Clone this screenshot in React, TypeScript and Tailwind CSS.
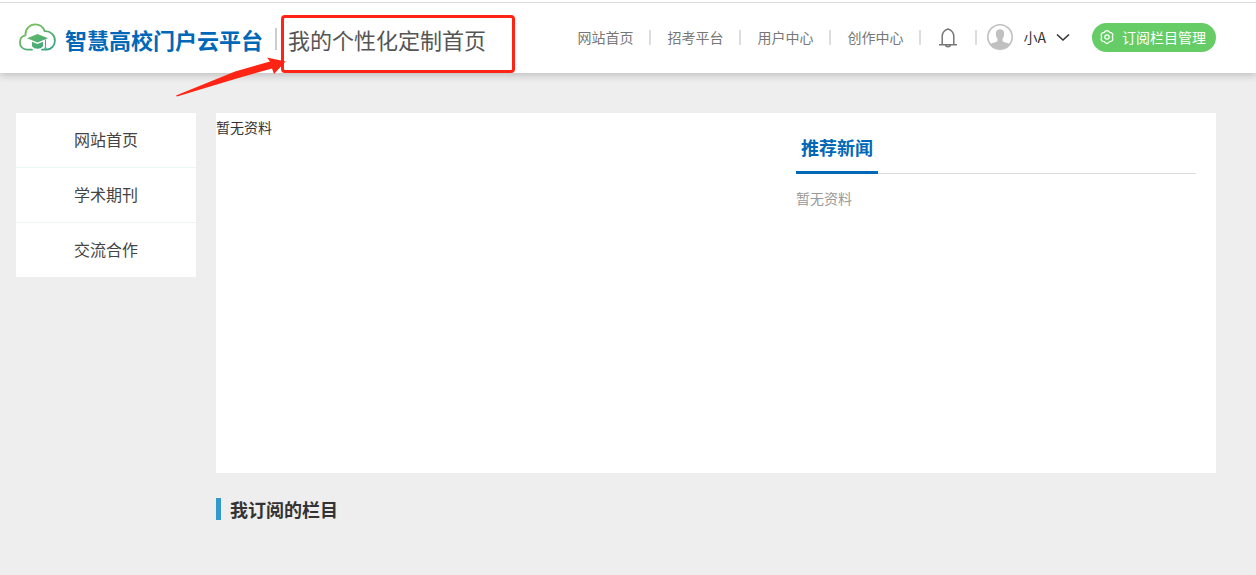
const navLinks = ["网站首页", "招考平台", "用户中心", "创作中心"];
const sideLinks = ["网站首页", "学术期刊", "交流合作"];

function Separator() {
  return <span className="h-[15px] w-0.5 bg-[#ddd]" />;
}

function CloudLogo() {
  return (
    <svg className="mb-1" width="38" height="28" viewBox="0 0 38 28" fill="none" aria-hidden="true">
      <defs>
        <linearGradient id="cloud" x1="8" y1="0" x2="26" y2="28" gradientUnits="userSpaceOnUse">
          <stop stopColor="#7fc35a" />
          <stop offset="1" stopColor="#3aa57f" />
        </linearGradient>
      </defs>
      <path
        d="M14 26.600H9C4.800 26.600 1.900 23.400 1.900 19.400c0-3.700 2.400-6.500 5.500-7.100C7.200 5.900 11.800 1.300 17.200 1.300c4.600 0 8.100 2.700 9.500 6.900 5.600-.4 10.200 3.700 10.200 9.200 0 5-3.400 9.200-8.300 9.200H24"
        stroke="url(#cloud)"
        strokeWidth="1.800"
        strokeLinecap="round"
      />
      <path d="M19.500 11 9 15.300l10.500 4.300 10.500-4.300z" fill="url(#cloud)" />
      <path d="M14 18.700v4.500c1.400 1.700 3.200 2.500 5.500 2.500s4.100-.8 5.500-2.500v-4.500L19.500 21z" fill="url(#cloud)" />
      <path d="M27.500 16.500v7.300l-1 2.500h2l-1-2.500" stroke="url(#cloud)" strokeWidth="1" />
    </svg>
  );
}

function BellIcon() {
  return (
    <svg width="18" height="22" viewBox="0 0 18 22" fill="none" stroke="#777" strokeWidth="1.500" aria-hidden="true">
      <path d="M0 18.700h18M3.200 18.700v-8.200C3.200 7 5.500 4.200 9 3c3.500 1.200 5.800 4 5.800 7.500v8.200M6.500 19c.3 1.200 1.200 1.800 2.500 1.800s2.200-.6 2.500-1.800" />
    </svg>
  );
}

function Avatar() {
  return (
    <svg width="26" height="26" viewBox="0 0 26 26" aria-hidden="true">
      <circle cx="13" cy="13" r="12.200" fill="#fff" stroke="#c0c0c0" strokeWidth="1.600" />
      <path
        d="M13 5.200c-2.700 0-4.200 1.700-4.200 4.200 0 2.300.7 4 1.700 5.200v2.300c-.5 1.200-4.500 1.600-7.500 3C5 23 9.200 25 13 25s8-2 10-5.100c-3-1.400-7-1.800-7.500-3v-2.300c1-1.200 1.700-2.900 1.700-5.200 0-2.500-1.500-4.200-4.200-4.200z"
        fill="#c0c0c0"
      />
    </svg>
  );
}

function GearIcon() {
  return (
    <svg width="14" height="14" viewBox="0 0 14 14" fill="none" stroke="#fff" strokeWidth="1.200" strokeLinejoin="round" aria-hidden="true">
      <path d="M4.300 2.300Q7-1.200 9.700 2.300 14.200 2.850 12.300 7 14.200 11.150 9.700 11.700 7 15.200 4.300 11.700-.2 11.150 1.700 7-.2 2.850 4.300 2.300z" />
      <circle cx="7" cy="7" r="2.200" />
    </svg>
  );
}

function Header() {
  return (
    <header className="relative bg-white pt-0.5 shadow-[0_2px_8px_rgba(0,0,0,0.22)]">
      <div className="flex h-[71px] items-center justify-between border-t border-[#ddd] pr-10 pl-[18px]">
        <div className="flex items-center pt-0.5">
          <CloudLogo />
          <h1 className="ml-[9px] text-[22px] leading-8 font-bold text-[#0068b7]">智慧高校门户云平台</h1>
          <span className="ml-3 h-[22px] w-0.5 bg-[#ccc]" />
          <div className="relative ml-[11px]">
            <h2 className="text-[22px] leading-8 text-[#555]">我的个性化定制首页</h2>
            <div className="absolute -top-2 -right-[29px] -bottom-[18px] -left-[7px] rounded border-3 border-[#ff2414]" />
            <svg className="absolute top-[34px] -left-[113px]" width="112" height="40" viewBox="0 0 112 40" aria-hidden="true">
              <path d="M1 38.500 60 14.500 95 4.500 92 .5l18.500 4L99 17l-2-5.500L60 22 2 39.500z" fill="#ff2414" />
            </svg>
          </div>
        </div>

        <div className="flex items-center pb-0.5">
          <nav className="flex items-center gap-4 text-sm text-[#777]">
            {navLinks.map((label) => (
              <div key={label} className="flex items-center gap-4">
                <a href="#">{label}</a>
                <Separator />
              </div>
            ))}
          </nav>
          <button aria-label="消息" className="mx-[18px]">
            <BellIcon />
          </button>
          <Separator />
          <button className="ml-[10px] flex items-center gap-[10px] text-sm text-[#333]">
            <Avatar />
            小A
            <svg width="14" height="10" viewBox="0 0 14 10" fill="none" stroke="#333" strokeWidth="1.600" aria-hidden="true">
              <path d="m1 2.500 6 5.500 6-5.500" />
            </svg>
          </button>
          <button className="ml-[22px] flex h-[29px] items-center gap-2 rounded-full bg-[#66cc66] pr-[10px] pl-2 text-sm text-white">
            <GearIcon />
            订阅栏目管理
          </button>
        </div>
      </div>
    </header>
  );
}

export default function App() {
  return (
    <div className="min-h-screen bg-[#eee] font-['Noto_Sans_CJK_SC',sans-serif] text-[#333]">
      <Header />
      <div className="flex items-start gap-5 pt-10 pr-10 pl-4">
        <aside className="w-[180px] divide-y divide-[#e8f6f4] bg-white text-center">
          {sideLinks.map((label) => (
            <a key={label} href="#" className="block pb-0.5 text-base leading-[52px] text-[#444]">
              {label}
            </a>
          ))}
        </aside>

        <main className="min-w-0 flex-1">
          <section className="flex min-h-[360px] justify-between bg-white pr-5">
            <p className="text-sm leading-7">暂无资料</p>
            <div className="w-[400px] pt-3">
              <div className="flex border-b border-[#ddd]">
                <h3 className="-mb-px border-b-3 border-[#0068b7] px-[5px] pb-0.5 text-lg leading-[44px] font-bold text-[#0068b7]">
                  推荐新闻
                </h3>
              </div>
              <p className="pt-[10px] text-sm leading-7 text-[#999]">暂无资料</p>
            </div>
          </section>

          <div className="flex items-center gap-[9px] pt-[25px] pb-6">
            <span className="h-[22px] w-[5px] bg-[#3399cc]" />
            <h3 className="text-lg leading-[22px] font-bold">我订阅的栏目</h3>
          </div>
        </main>
      </div>
    </div>
  );
}
